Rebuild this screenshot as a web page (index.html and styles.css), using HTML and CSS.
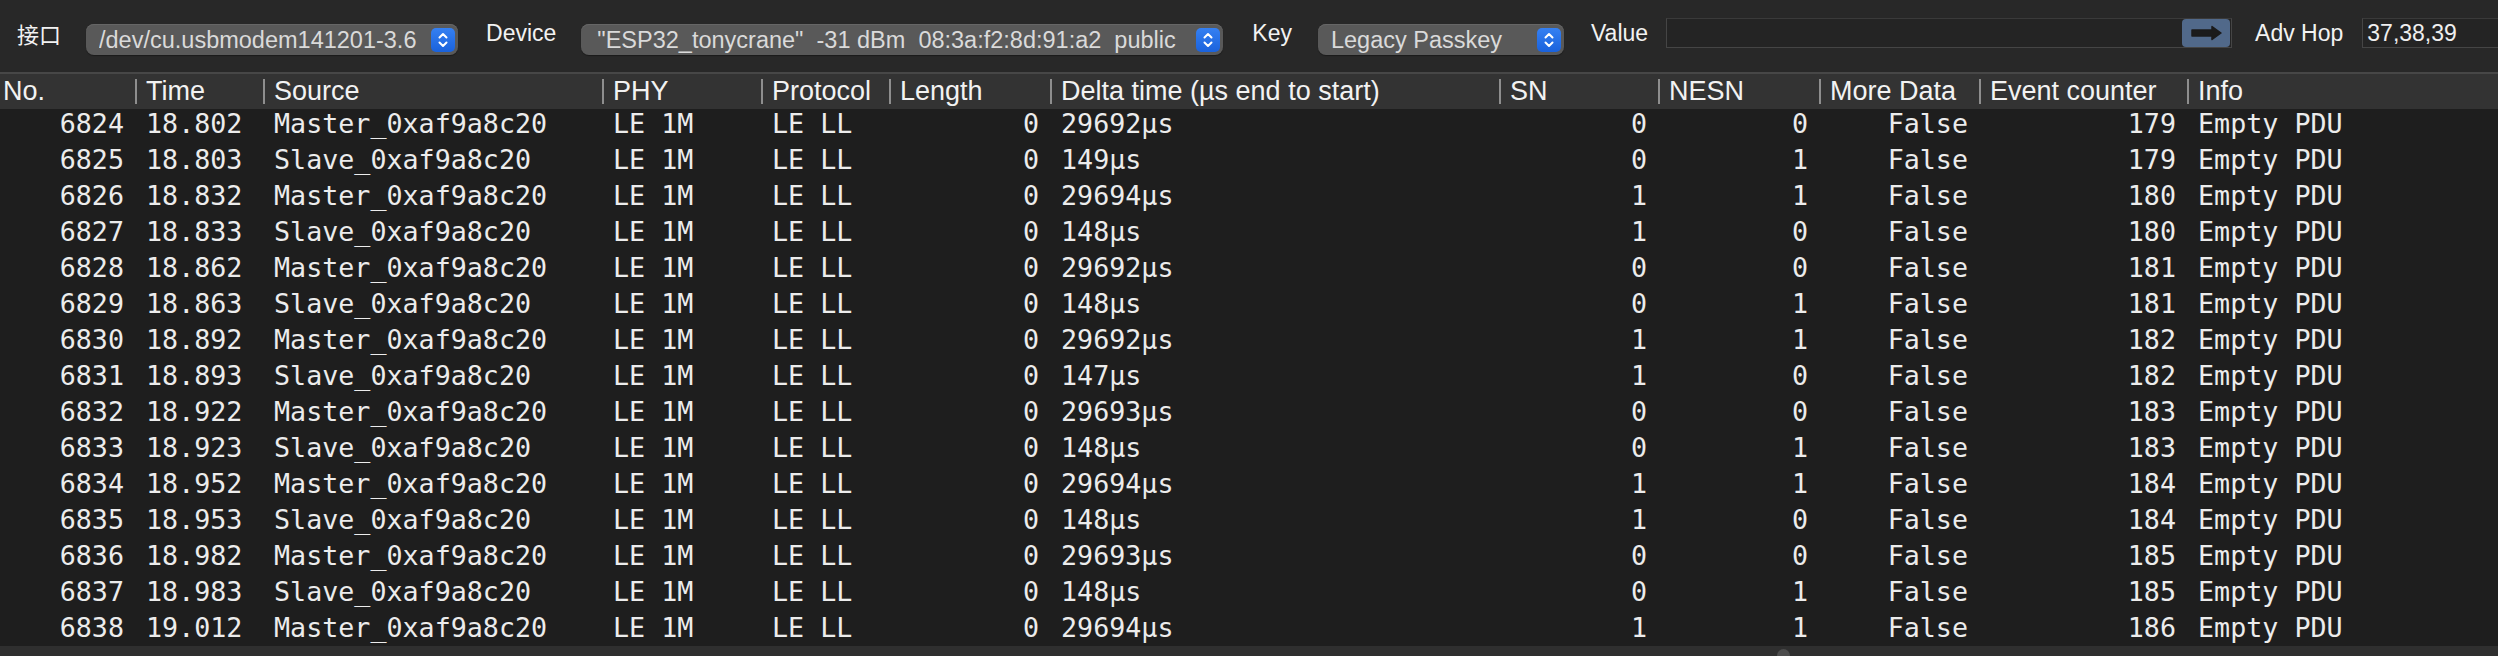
FILE: index.html
```html
<!DOCTYPE html>
<html lang="zh">
<head>
<meta charset="utf-8">
<title>Sniffer</title>
<link rel="stylesheet" href="styles.css">
</head>
<body>
<div class="app">
  <div class="toolbar">
    <span class="label label-port">接口</span>
    <div class="select select-port"><span class="select-text">/dev/cu.usbmodem141201-3.6</span><span class="stepper"><svg width="24" height="24" viewBox="0 0 24 24"><path d="M8.5 9.5 L12 6 L15.5 9.5 M8.5 14.5 L12 18 L15.5 14.5" fill="none" stroke="#fff" stroke-width="2" stroke-linecap="round" stroke-linejoin="round"/></svg></span></div>
    <span class="label label-device">Device</span>
    <div class="select select-device"><span class="select-text">"ESP32_tonycrane"  -31 dBm  08:3a:f2:8d:91:a2  public</span><span class="stepper"><svg width="24" height="24" viewBox="0 0 24 24"><path d="M8.5 9.5 L12 6 L15.5 9.5 M8.5 14.5 L12 18 L15.5 14.5" fill="none" stroke="#fff" stroke-width="2" stroke-linecap="round" stroke-linejoin="round"/></svg></span></div>
    <span class="label label-key">Key</span>
    <div class="select select-key"><span class="select-text">Legacy Passkey</span><span class="stepper"><svg width="24" height="24" viewBox="0 0 24 24"><path d="M8.5 9.5 L12 6 L15.5 9.5 M8.5 14.5 L12 18 L15.5 14.5" fill="none" stroke="#fff" stroke-width="2" stroke-linecap="round" stroke-linejoin="round"/></svg></span></div>
    <span class="label label-value">Value</span>
    <div class="field field-value"><span class="field-text"></span><span class="go-btn"><svg width="48" height="28" viewBox="0 0 48 28"><path d="M10 11 H30 V7.5 L39 14 L30 20.5 V17 H10 Z" fill="#1b1b1b" stroke="#1b1b1b" stroke-width="1.5" stroke-linejoin="round"/></svg></span></div>
    <span class="label label-hop">Adv Hop</span>
    <div class="field field-hop"><span class="field-text">37,38,39</span></div>
  </div>

  <div class="thead">
    <div class="th first">No.</div>
    <div class="th">Time</div>
    <div class="th">Source</div>
    <div class="th">PHY</div>
    <div class="th">Protocol</div>
    <div class="th">Length</div>
    <div class="th">Delta time (µs end to start)</div>
    <div class="th">SN</div>
    <div class="th">NESN</div>
    <div class="th">More Data</div>
    <div class="th">Event counter</div>
    <div class="th">Info</div>
  </div>

  <div class="tbody">
    <div class="rows">
      <div class="tr"><span class="td num">6824</span><span class="td">18.802</span><span class="td">Master_0xaf9a8c20</span><span class="td">LE 1M</span><span class="td">LE LL</span><span class="td num">0</span><span class="td">29692µs</span><span class="td num">0</span><span class="td num">0</span><span class="td num">False</span><span class="td num">179</span><span class="td">Empty PDU</span></div>
      <div class="tr"><span class="td num">6825</span><span class="td">18.803</span><span class="td">Slave_0xaf9a8c20</span><span class="td">LE 1M</span><span class="td">LE LL</span><span class="td num">0</span><span class="td">149µs</span><span class="td num">0</span><span class="td num">1</span><span class="td num">False</span><span class="td num">179</span><span class="td">Empty PDU</span></div>
      <div class="tr"><span class="td num">6826</span><span class="td">18.832</span><span class="td">Master_0xaf9a8c20</span><span class="td">LE 1M</span><span class="td">LE LL</span><span class="td num">0</span><span class="td">29694µs</span><span class="td num">1</span><span class="td num">1</span><span class="td num">False</span><span class="td num">180</span><span class="td">Empty PDU</span></div>
      <div class="tr"><span class="td num">6827</span><span class="td">18.833</span><span class="td">Slave_0xaf9a8c20</span><span class="td">LE 1M</span><span class="td">LE LL</span><span class="td num">0</span><span class="td">148µs</span><span class="td num">1</span><span class="td num">0</span><span class="td num">False</span><span class="td num">180</span><span class="td">Empty PDU</span></div>
      <div class="tr"><span class="td num">6828</span><span class="td">18.862</span><span class="td">Master_0xaf9a8c20</span><span class="td">LE 1M</span><span class="td">LE LL</span><span class="td num">0</span><span class="td">29692µs</span><span class="td num">0</span><span class="td num">0</span><span class="td num">False</span><span class="td num">181</span><span class="td">Empty PDU</span></div>
      <div class="tr"><span class="td num">6829</span><span class="td">18.863</span><span class="td">Slave_0xaf9a8c20</span><span class="td">LE 1M</span><span class="td">LE LL</span><span class="td num">0</span><span class="td">148µs</span><span class="td num">0</span><span class="td num">1</span><span class="td num">False</span><span class="td num">181</span><span class="td">Empty PDU</span></div>
      <div class="tr"><span class="td num">6830</span><span class="td">18.892</span><span class="td">Master_0xaf9a8c20</span><span class="td">LE 1M</span><span class="td">LE LL</span><span class="td num">0</span><span class="td">29692µs</span><span class="td num">1</span><span class="td num">1</span><span class="td num">False</span><span class="td num">182</span><span class="td">Empty PDU</span></div>
      <div class="tr"><span class="td num">6831</span><span class="td">18.893</span><span class="td">Slave_0xaf9a8c20</span><span class="td">LE 1M</span><span class="td">LE LL</span><span class="td num">0</span><span class="td">147µs</span><span class="td num">1</span><span class="td num">0</span><span class="td num">False</span><span class="td num">182</span><span class="td">Empty PDU</span></div>
      <div class="tr"><span class="td num">6832</span><span class="td">18.922</span><span class="td">Master_0xaf9a8c20</span><span class="td">LE 1M</span><span class="td">LE LL</span><span class="td num">0</span><span class="td">29693µs</span><span class="td num">0</span><span class="td num">0</span><span class="td num">False</span><span class="td num">183</span><span class="td">Empty PDU</span></div>
      <div class="tr"><span class="td num">6833</span><span class="td">18.923</span><span class="td">Slave_0xaf9a8c20</span><span class="td">LE 1M</span><span class="td">LE LL</span><span class="td num">0</span><span class="td">148µs</span><span class="td num">0</span><span class="td num">1</span><span class="td num">False</span><span class="td num">183</span><span class="td">Empty PDU</span></div>
      <div class="tr"><span class="td num">6834</span><span class="td">18.952</span><span class="td">Master_0xaf9a8c20</span><span class="td">LE 1M</span><span class="td">LE LL</span><span class="td num">0</span><span class="td">29694µs</span><span class="td num">1</span><span class="td num">1</span><span class="td num">False</span><span class="td num">184</span><span class="td">Empty PDU</span></div>
      <div class="tr"><span class="td num">6835</span><span class="td">18.953</span><span class="td">Slave_0xaf9a8c20</span><span class="td">LE 1M</span><span class="td">LE LL</span><span class="td num">0</span><span class="td">148µs</span><span class="td num">1</span><span class="td num">0</span><span class="td num">False</span><span class="td num">184</span><span class="td">Empty PDU</span></div>
      <div class="tr"><span class="td num">6836</span><span class="td">18.982</span><span class="td">Master_0xaf9a8c20</span><span class="td">LE 1M</span><span class="td">LE LL</span><span class="td num">0</span><span class="td">29693µs</span><span class="td num">0</span><span class="td num">0</span><span class="td num">False</span><span class="td num">185</span><span class="td">Empty PDU</span></div>
      <div class="tr"><span class="td num">6837</span><span class="td">18.983</span><span class="td">Slave_0xaf9a8c20</span><span class="td">LE 1M</span><span class="td">LE LL</span><span class="td num">0</span><span class="td">148µs</span><span class="td num">0</span><span class="td num">1</span><span class="td num">False</span><span class="td num">185</span><span class="td">Empty PDU</span></div>
      <div class="tr"><span class="td num">6838</span><span class="td">19.012</span><span class="td">Master_0xaf9a8c20</span><span class="td">LE 1M</span><span class="td">LE LL</span><span class="td num">0</span><span class="td">29694µs</span><span class="td num">1</span><span class="td num">1</span><span class="td num">False</span><span class="td num">186</span><span class="td">Empty PDU</span></div>
    </div>
  </div>

  <div class="hscroll"><span class="knob"></span></div>
</div>
</body>
</html>
```

FILE: styles.css
```css
html, body {
  margin: 0;
  padding: 0;
  background: #1e1e1e;
}

body {
  width: 2498px;
  height: 656px;
  overflow: hidden;
}

.app {
  display: flex;
  flex-direction: column;
  height: 656px;
}

/* ---------- toolbar ---------- */
.toolbar {
  flex: none;
  height: 72px;
  background: #282828;
  display: flex;
  align-items: flex-start;
  padding-left: 17px;
  overflow: hidden;
  font-family: "Liberation Sans", "Noto Sans CJK SC", sans-serif;
  font-size: 23px;
  color: #f2f2f2;
}

.label {
  flex: none;
  margin-top: 19px;
  line-height: 28px;
  white-space: nowrap;
}

.label-port {
  font-family: "Noto Sans CJK SC", sans-serif;
  font-size: 22px;
}

.label-device { margin-left: 28px; }
.label-key { margin-left: 29px; }
.label-value { margin-left: 27px; }
.label-hop { margin-left: 23px; }

.select {
  flex: none;
  box-sizing: border-box;
  margin-top: 24px;
  height: 31px;
  border-radius: 8px;
  background: #595959;
  box-shadow: inset 0 1px 0 #666, 0 1px 1px rgba(0, 0, 0, 0.35);
  display: flex;
  align-items: center;
  padding-left: 13px;
  padding-right: 3px;
  color: #dadada;
  font-size: 23.5px;
}

.select-text {
  flex: 1;
  white-space: pre;
  overflow: hidden;
  line-height: 31px;
  padding-top: 1px;
}

.select-port { margin-left: 25px; width: 372px; }
.select-device { margin-left: 25px; width: 642px; padding-left: 16px; }
.select-key { margin-left: 26px; width: 246px; }

.stepper {
  flex: none;
  width: 24px;
  height: 24px;
  border-radius: 5px;
  background: linear-gradient(#3580f2, #1a62dc);
  display: flex;
}

.field {
  flex: none;
  box-sizing: border-box;
  margin-top: 18px;
  height: 30px;
  background: #242424;
  border: 1px solid #454545;
  border-top-color: #3a3a3a;
  display: flex;
  align-items: center;
}

.field-value {
  margin-left: 18px;
  width: 566px;
  justify-content: flex-end;
  padding-right: 1px;
}

.field-hop {
  margin-left: 19px;
  width: 160px;
  padding-left: 4px;
  color: #efefef;
}

.field-text {
  white-space: pre;
  line-height: 28px;
}

.field-value .field-text { flex: 1; }

.go-btn {
  flex: none;
  width: 48px;
  height: 28px;
  border-radius: 4px;
  background: #51698a;
  display: flex;
}

/* ---------- table header ---------- */
.thead,
.tr {
  display: grid;
  grid-template-columns: 135px 128px 339px 159px 128px 161px 449px 159px 161px 160px 208px 1fr;
}

.thead {
  flex: none;
  height: 35px;
  background: #333333;
  border-top: 2px solid #474747;
  font-family: "Liberation Sans", sans-serif;
  font-size: 27px;
  color: #f2f2f2;
}

.th {
  display: flex;
  align-items: center;
  white-space: nowrap;
  overflow: hidden;
}

.th::before {
  content: "";
  flex: none;
  width: 2px;
  height: 25px;
  background: #8e8e8e;
  margin-right: 9px;
}

.th.first {
  padding-left: 3px;
}

.th.first::before {
  display: none;
}

/* ---------- table body ---------- */
.tbody {
  flex: 1;
  overflow: hidden;
  background: #1e1e1e;
}

.rows {
  margin-top: -3px;
}

.tr {
  height: 36px;
  align-items: center;
  font-family: "DejaVu Sans Mono", "Liberation Mono", monospace;
  font-size: 26.7px;
  line-height: 36px;
  color: #ececec;
}

.td {
  padding: 0 11px;
  white-space: pre;
  overflow: hidden;
}

.td.num {
  text-align: right;
}

/* ---------- bottom scroller ---------- */
.hscroll {
  flex: none;
  position: relative;
  height: 10px;
  background: #2f2f2f;
  overflow: hidden;
}

.knob {
  position: absolute;
  left: 1777px;
  top: 3px;
  width: 13px;
  height: 13px;
  border-radius: 50%;
  background: #4d4d4d;
}
```
